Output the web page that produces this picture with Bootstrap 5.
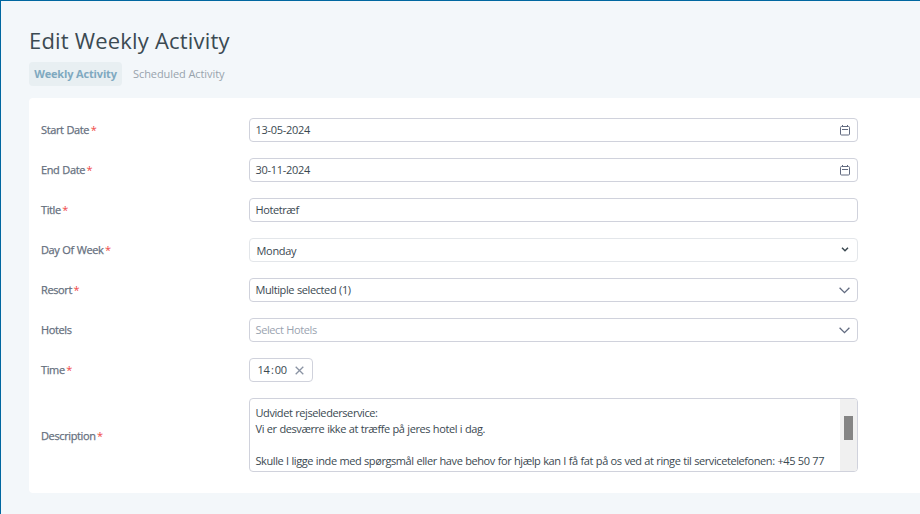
<!DOCTYPE html>
<html lang="en">
<head>
<meta charset="utf-8">
<meta name="viewport" content="width=device-width, initial-scale=1">
<title>Edit Weekly Activity</title>
<link href="https://cdn.jsdelivr.net/npm/bootstrap@5.3.0/dist/css/bootstrap.min.css" rel="stylesheet">
<style>
html, body { height: 100%; }
body { font-family: "Open Sans", "Noto Sans", sans-serif; font-size: 11px; line-height: 16px; color: #3b4951; background: #f3f7fa; overflow: hidden; }
.app-shell { height: 100%; border-left: 1px solid #0067a0; border-top: 1px solid #0067a0; padding: 23px 0 0 28px; }
.page-title { font-size: 22px; line-height: 32px; font-weight: 400; color: #3b4a52; letter-spacing: .19px; margin: 0 0 6px; }
.tabs { height: 24px; margin-bottom: 12px; }
.tabs .nav-link { padding: 0; height: 24px; line-height: 23px; color: #98a3ad; border-radius: 4px; letter-spacing: -.08px; }
.tabs .nav-link.active { width: 93px; text-align: center; background: #e8eff2; color: #7fa9c0; font-weight: 700; letter-spacing: -.15px; margin-right: 11px; }
.panel { height: 395px; background: #fff; border-radius: 4px 0 0 4px; padding: 20px 0 0 12px; }
.fields { gap: 16px; }
.field-label { width: 208px; color: #66707e; letter-spacing: -.38px; word-spacing: .4px; -webkit-text-stroke: .25px #66707e; }
.field-label.low { padding-top: 2px; }
.req { color: #f04848; margin-left: 1.5px; -webkit-text-stroke: 0; }
.control { width: 609px; height: 24px; border: 1px solid #d0d2dc; border-radius: 4px; background: #fff; padding: 0 7px 0 5.5px; letter-spacing: -.4px; word-spacing: .4px; font-size: 11px; line-height: 16px; color: #3b4951; }
.digits { letter-spacing: -.3px; }
.control.native { border-color: #e3e6ea; padding: 1px 8px 0 6.5px; letter-spacing: -.3px; }
.control.time { width: 64px; padding: 0 8px 0 7.5px; letter-spacing: -.25px; }
.colon { margin: 0 1.3px 0 1.3px; }
.control.area { height: 74px; padding: 0; overflow: hidden; }
.area-text { padding: 6px 0 0 5.5px; white-space: pre; letter-spacing: -.415px; word-spacing: .33px; width: 590px; }
.track { width: 17px; flex: none; background: #f0f0f0; padding: 17px 4px 0; }
.thumb { width: 9px; height: 24px; background: #858585; }
.hint { color: #9aa3b0; }
.native-arrow { margin-bottom: 2px; }
svg { display: block; fill: none; }
</style>
<script src="https://cdn.jsdelivr.net/npm/bootstrap@5.3.0/dist/js/bootstrap.bundle.min.js"></script>
</head>
<body>
<main class="app-shell">
  <h1 class="page-title">Edit Weekly Activity</h1>
  <nav class="nav tabs">
    <a class="nav-link active" href="#">Weekly Activity</a>
    <a class="nav-link" href="#">Scheduled Activity</a>
  </nav>
  <form class="panel">
    <div class="fields d-flex flex-column">
      <div class="d-flex align-items-center"><div class="field-label">Start Date<span class="req">*</span></div>
        <div class="control d-flex align-items-center justify-content-between"><span class="digits">13-05-2024</span>
          <svg width="10" height="11" viewBox="0 0 10 11" stroke="#626b80"><rect x=".5" y="1.5" width="9" height="8.5" rx="1"/><path d="M2 4.5h6"/><path d="M2.5 0v2M7.5 0v2"/></svg></div></div>
      <div class="d-flex align-items-center"><div class="field-label">End Date<span class="req">*</span></div>
        <div class="control d-flex align-items-center justify-content-between"><span class="digits">30-11-2024</span>
          <svg width="10" height="11" viewBox="0 0 10 11" stroke="#626b80"><rect x=".5" y="1.5" width="9" height="8.5" rx="1"/><path d="M2 4.5h6"/><path d="M2.5 0v2M7.5 0v2"/></svg></div></div>
      <div class="d-flex align-items-center"><div class="field-label">Title<span class="req">*</span></div>
        <div class="control d-flex align-items-center"><span>Hotetræf</span></div></div>
      <div class="d-flex align-items-center"><div class="field-label">Day Of Week<span class="req">*</span></div>
        <div class="control native d-flex align-items-center justify-content-between"><span>Monday</span>
          <svg class="native-arrow" width="8" height="5" viewBox="0 0 8 5" stroke="#3b4951" stroke-width="1.5"><path d="M1 .7 4 3.7 7 .7"/></svg></div></div>
      <div class="d-flex align-items-center"><div class="field-label">Resort<span class="req">*</span></div>
        <div class="control d-flex align-items-center justify-content-between"><span>Multiple selected (1)</span>
          <svg width="11" height="7" viewBox="0 0 11 7" stroke="#626b80" stroke-width="1.3"><path d="M.6.7 5.5 5.6 10.4.7"/></svg></div></div>
      <div class="d-flex align-items-center"><div class="field-label">Hotels</div>
        <div class="control d-flex align-items-center justify-content-between"><span class="hint">Select Hotels</span>
          <svg width="11" height="7" viewBox="0 0 11 7" stroke="#626b80" stroke-width="1.3"><path d="M.6.7 5.5 5.6 10.4.7"/></svg></div></div>
      <div class="d-flex align-items-center"><div class="field-label">Time<span class="req">*</span></div>
        <div class="control time d-flex align-items-center justify-content-between"><span>14<span class="colon">:</span>00</span>
          <svg width="9" height="9" viewBox="0 0 9 9" stroke="#8a93a3" stroke-width="1.3"><path d="M.7.7l7.6 7.6M8.3.7.7 8.3"/></svg></div></div>
      <div class="d-flex align-items-center"><div class="field-label low">Description<span class="req">*</span></div>
        <div class="control area d-flex justify-content-between"><div class="area-text">Udvidet rejselederservice:
Vi er desværre ikke at træffe på jeres hotel i dag.

Skulle I ligge inde med spørgsmål eller have behov for hjælp kan I få fat på os ved at ringe til servicetelefonen: +45 50 77</div>
          <div class="track"><div class="thumb"></div></div></div></div>
    </div>
  </form>
</main>
</body>
</html>
